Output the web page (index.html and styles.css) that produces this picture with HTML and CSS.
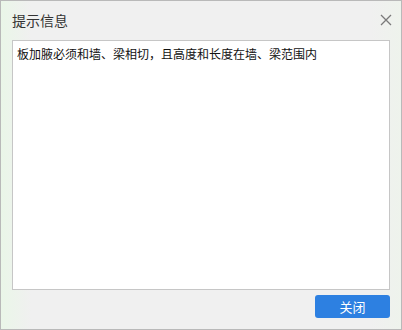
FILE: index.html
```html
<!DOCTYPE html>
<html lang="zh">
<head>
<meta charset="utf-8">
<link rel="stylesheet" href="styles.css">
</head>
<body>
<div class="dialog">
  <div class="titlebar">
    <span class="title">提示信息</span>
    <svg class="close" width="12" height="12" viewBox="0 0 12 12"><path d="M1 1L11 11M11 1L1 11" stroke="#7a7a7a" stroke-width="1.3" fill="none"/></svg>
  </div>
  <div class="content">板加腋必须和墙、梁相切，且高度和长度在墙、梁范围内</div>
  <div class="footer">
    <button class="btn">关闭</button>
  </div>
</div>
</body>
</html>
```
FILE: styles.css
```css
html, body { margin: 0; padding: 0; }
body {
  width: 402px; height: 330px; overflow: hidden;
  font-family: "Noto Sans CJK SC", "Noto Sans", sans-serif;
}
.dialog {
  box-sizing: border-box;
  width: 402px; height: 330px;
  border: 1px solid #b9b9b9;
  background: linear-gradient(90deg, #eaf6e8 0px, #f0f0f0 30px, #f0f0f0 370px, #eef3ec 402px);
  display: flex; flex-direction: column;
  padding: 0 11px 0 11px;
}
.titlebar {
  height: 38px;
  display: flex; align-items: center; justify-content: space-between;
  padding-bottom: 1px;
}
.title {
  font-size: 14px; color: #333;
  line-height: 16px;
  margin-top: -1px;
}
.close { margin-right: -2px; margin-top: -1px; }
.content {
  box-sizing: border-box;
  height: 250px;
  background: #fff;
  border: 1px solid #c6c6c6;
  padding: 5px 4px;
  font-size: 12px; color: #111;
  line-height: 16px;
}
.footer {
  display: flex; justify-content: flex-end;
  padding-top: 5px;
}
.btn {
  width: 75px; height: 23px;
  border: none; border-radius: 3px;
  background: #2d80e1; color: #fff;
  font-family: "Noto Sans CJK SC", sans-serif;
  font-size: 13px; padding: 0;
  line-height: 23px;
}
```
